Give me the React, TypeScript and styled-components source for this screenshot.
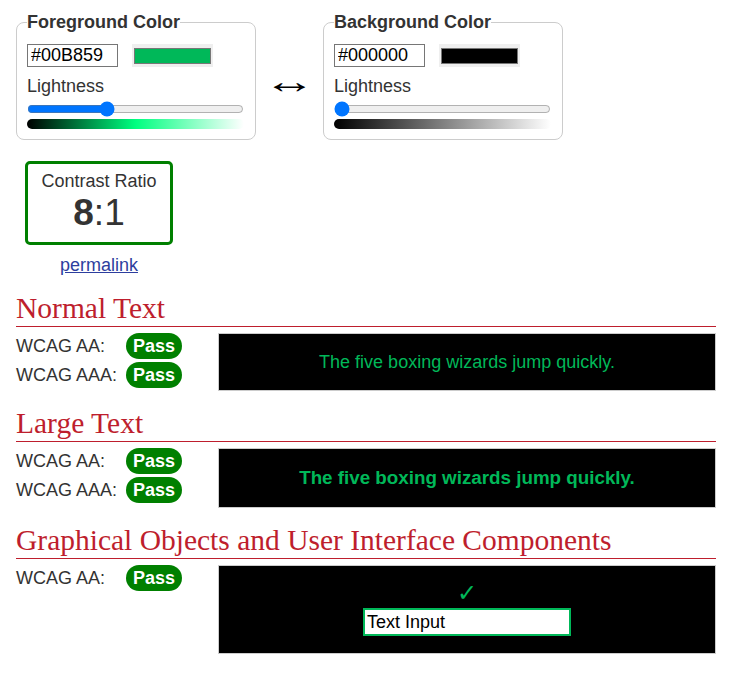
import React from 'react'
import styled, { createGlobalStyle, css } from 'styled-components'

const GlobalStyle = createGlobalStyle`
  body {
    margin: 0;
    background: #fff;
    color: #333;
    font-family: "Liberation Sans", Arial, sans-serif;
  }
`

const Page = styled.div`
  width: 700px;
  padding: 12px 16px 0;
`

const TopRow = styled.div`
  display: flex;
  align-items: flex-start;
`

const ColorSet = styled.fieldset`
  box-sizing: border-box;
  width: 240px;
  margin: 0;
  padding: 0 10px 10px;
  border: 1px solid #ccc;
  border-radius: 8px;
  min-inline-size: 0;
`

const Legend = styled.legend`
  padding: 0;
  font-size: 18px;
  line-height: 21px;
  font-weight: bold;
  color: #333;
`

const InputRow = styled.div`
  display: flex;
  gap: 14px;
  margin-top: 11px;
`

const HexInput = styled.input`
  box-sizing: border-box;
  width: 91px;
  height: 23px;
  margin: 0;
  padding: 0 3px;
  border: 1px solid #767676;
  font-family: inherit;
  font-size: 18px;
  color: #000;
`

const Swatch = styled.div`
  box-sizing: border-box;
  width: 81px;
  height: 23px;
  padding: 4px 2px 3px;
  background: #efefef;
`

const SwatchFill = styled.div<{ $color: string }>`
  box-sizing: border-box;
  height: 16px;
  border: 1px solid #777;
  background: ${({ $color }) => $color};
`

const Label = styled.div`
  margin-top: 9px;
  font-size: 18px;
  line-height: 21px;
`

const Slider = styled.input`
  display: block;
  width: 217px;
  height: 16px;
  margin: 4px 0 2px;
  accent-color: #0075ff;
`

const Gradient = styled.div<{ $mid: string }>`
  width: 217px;
  height: 10px;
  border-radius: 5px;
  background: linear-gradient(to right, #000, ${({ $mid }) => $mid}, #fff);
`

const Swap = styled.div`
  width: 67px;
  padding-top: 50px;
  text-align: center;
  font-size: 35px;
  line-height: 38px;
  color: #000;

  span {
    display: inline-block;
    transform: scaleX(1.5);
  }
`

const ContrastColumn = styled.div`
  display: flex;
  flex-direction: column;
  align-items: center;
  width: 166px;
  margin-top: 21px;
`

const ContrastBox = styled.div`
  box-sizing: border-box;
  width: 148px;
  padding: 7px 0 8px;
  border: 3px solid #008000;
  border-radius: 5px;
  text-align: center;
`

const ContrastLabel = styled.div`
  font-size: 18px;
  line-height: 21px;
`

const Ratio = styled.div`
  font-size: 37px;
  line-height: 42px;

  b {
    font-weight: bold;
  }
`

const Permalink = styled.a`
  margin-top: 10px;
  font-size: 18px;
  line-height: 21px;
  color: #2d3e9e;
`

const Heading = styled.h2`
  margin: 17px 0 0;
  padding-bottom: 3px;
  border-bottom: 1px solid #be1e2d;
  font-family: "Liberation Serif", Georgia, serif;
  font-size: 29.5px;
  line-height: 30px;
  font-weight: normal;
  color: #be1e2d;
`

const Results = styled.div`
  display: flex;
  align-items: flex-start;
  margin-top: 6px;
`

const Checks = styled.div`
  display: flex;
  flex-direction: column;
  gap: 3px;
  width: 200px;
  margin-right: 2px;
`

const CheckRow = styled.div`
  display: flex;
  align-items: center;
  font-size: 18px;
`

const CheckName = styled.span`
  width: 110px;
`

const Badge = styled.span`
  width: 56px;
  height: 26px;
  border-radius: 13px;
  background: #008000;
  color: #fff;
  font-size: 18px;
  font-weight: bold;
  line-height: 26px;
  text-align: center;
`

const Sample = styled.div<{ $height: number; $bold?: boolean }>`
  box-sizing: border-box;
  flex: 1;
  display: flex;
  align-items: center;
  justify-content: center;
  height: ${({ $height }) => $height}px;
  border: 1px solid #ccc;
  background: #000;
  color: #00b859;
  font-size: 18px;
  ${({ $bold }) =>
    $bold &&
    css`
      font-size: 18.8px;
      font-weight: bold;
    `}
`

const UiSample = styled(Sample)`
  flex-direction: column;
  justify-content: flex-start;
  padding-top: 15px;
`

const Tick = styled.div`
  font-family: "DejaVu Sans", sans-serif;
  font-size: 24px;
  font-weight: bold;
  line-height: 25px;
  color: #00b859;
`

const TextInput = styled.div`
  box-sizing: border-box;
  width: 208px;
  height: 28px;
  margin-top: 2px;
  padding: 0 2px;
  border: 2px solid #00b859;
  background: #fff;
  color: #000;
  font-size: 18px;
  line-height: 24px;
`

interface ColorPickerProps {
  title: string
  hex: string
  lightness: number
  mid: string
}

function ColorPicker({ title, hex, lightness, mid }: ColorPickerProps) {
  return (
    <ColorSet>
      <Legend>{title}</Legend>
      <InputRow>
        <HexInput defaultValue={hex} />
        <Swatch>
          <SwatchFill $color={hex} />
        </Swatch>
      </InputRow>
      <Label>Lightness</Label>
      <Slider type="range" min={0} max={100} defaultValue={lightness} />
      <Gradient $mid={mid} />
    </ColorSet>
  )
}

function Check({ name }: { name: string }) {
  return (
    <CheckRow>
      <CheckName>{name}</CheckName>
      <Badge>Pass</Badge>
    </CheckRow>
  )
}

const sentence = 'The five boxing wizards jump quickly.'

export default function App() {
  return (
    <Page>
      <GlobalStyle />
      <TopRow>
        <ColorPicker title="Foreground Color" hex="#00B859" lightness={36} mid="#00ff80" />
        <Swap>
          <span>↔</span>
        </Swap>
        <ColorPicker title="Background Color" hex="#000000" lightness={0} mid="#808080" />
      </TopRow>

      <ContrastColumn>
        <ContrastBox>
          <ContrastLabel>Contrast Ratio</ContrastLabel>
          <Ratio>
            <b>8</b>:1
          </Ratio>
        </ContrastBox>
        <Permalink href="#">permalink</Permalink>
      </ContrastColumn>

      <Heading>Normal Text</Heading>
      <Results>
        <Checks>
          <Check name="WCAG AA:" />
          <Check name="WCAG AAA:" />
        </Checks>
        <Sample $height={58}>{sentence}</Sample>
      </Results>

      <Heading>Large Text</Heading>
      <Results>
        <Checks>
          <Check name="WCAG AA:" />
          <Check name="WCAG AAA:" />
        </Checks>
        <Sample $height={60} $bold>
          {sentence}
        </Sample>
      </Results>

      <Heading>Graphical Objects and User Interface Components</Heading>
      <Results>
        <Checks>
          <Check name="WCAG AA:" />
        </Checks>
        <UiSample $height={89}>
          <Tick>✓</Tick>
          <TextInput>Text Input</TextInput>
        </UiSample>
      </Results>
    </Page>
  )
}
